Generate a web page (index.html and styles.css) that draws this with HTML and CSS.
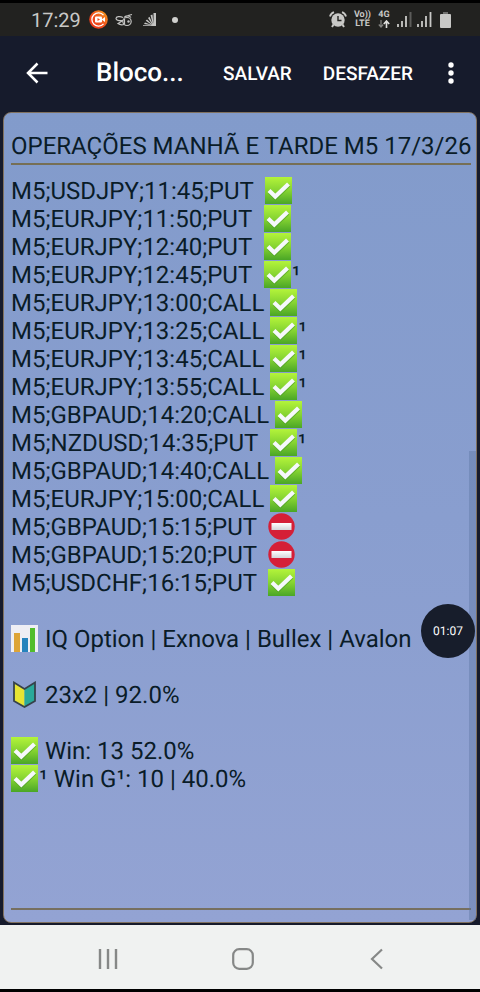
FILE: index.html
```
<!DOCTYPE html>
<html lang="pt-BR">
<head>
    <meta charset="UTF-8">
    <meta name="viewport" content="width=device-width, initial-scale=1.0">
    <title>Bloco de notas</title>
    <link rel="stylesheet" href="styles.css">
</head>
<body>
    <!-- icons reused in the note -->
    <svg class="defs" aria-hidden="true">
        <defs>
            <linearGradient id="green" x1="0" y1="0" x2="0" y2="1">
                <stop offset="0" stop-color="#b4f43a"/>
                <stop offset="0.5" stop-color="#86d432"/>
                <stop offset="1" stop-color="#4aa626"/>
            </linearGradient>
            <linearGradient id="bar" x1="0" y1="0" x2="0" y2="1">
                <stop offset="0" stop-color="#fff"/>
                <stop offset="1" stop-color="#d4d4d8"/>
            </linearGradient>
            <linearGradient id="rec" x1="0" y1="1" x2="1" y2="0">
                <stop offset="0" stop-color="#ee2d16"/>
                <stop offset="0.5" stop-color="#f0521c"/>
                <stop offset="1" stop-color="#f7a81c"/>
            </linearGradient>
        </defs>
        <symbol id="check" viewBox="0 0 27 27">
            <rect width="27" height="27" fill="url(#green)"/>
            <path d="M4.500 15l6 5.800L24 8" fill="none" stroke="#3f8f22" stroke-opacity=".5" stroke-width="4"/>
            <path d="M4 13.500l6.300 6L23.500 7" fill="none" stroke="#f6f8fb" stroke-width="4.200"/>
        </symbol>
        <symbol id="stop" viewBox="0 0 27 27">
            <circle cx="13.500" cy="13.500" r="13.200" fill="#d51f37"/>
            <rect x="3.500" y="10" width="20" height="7" fill="url(#bar)"/>
        </symbol>
        <symbol id="chart" viewBox="0 0 27 27">
            <rect width="27" height="27" fill="#eeeef4"/>
            <rect x="3" y="8" width="6" height="19" fill="#dda437"/>
            <rect x="11" y="13" width="6" height="14" fill="#2583bd"/>
            <rect x="19" y="3" width="5" height="24" fill="#51bd2c"/>
        </symbol>
        <symbol id="beginner" viewBox="0 0 27 27">
            <path d="M3 1.500l10.500 6.500v18L3 20z" fill="#e7e433"/>
            <path d="M24 1.500L13.500 8v18L24 20z" fill="#29a99a"/>
            <path d="M3 1.500L13.500 8 24 1.500V20l-10.500 6L3 20z" fill="none" stroke="#36424a" stroke-width="1.800"/>
        </symbol>
    </svg>

    <div class="status-bar">
        <span class="clock">17:29</span>
        <svg class="recorder" viewBox="0 0 19 19">
            <circle cx="9.500" cy="9.500" r="9.300" fill="url(#rec)"/>
            <path d="M14.500 5.200a6.600 6.600 0 1 0 0 8.600" fill="none" stroke="#fff" stroke-width="1.300"/>
            <rect x="6" y="6.500" width="7" height="6" rx="1" fill="#fff"/>
            <path d="M12.500 9.500l3.500-2.500v5z" fill="#fff"/>
            <path d="M8.500 8l2.500 1.500L8.500 11z" fill="#ef4f1c"/>
        </svg>
        <svg class="bee" viewBox="0 0 18 14">
            <g fill="none" stroke="#c4c4c2" stroke-width="1.200">
                <path d="M8 4.500C5 3 1 3.500 1 5.500S4 8 8 7.500L3 10.500c2 1.500 4 1.500 6 1"/>
                <ellipse cx="12" cy="8.500" rx="4.200" ry="4"/>
                <path d="M9.500 6v5M9 4.500c1.500-2 5-2.500 7 0M13 2.500l4-1"/>
            </g>
            <circle cx="13.500" cy="8.500" r="1.200" fill="#c4c4c2"/>
        </svg>
        <svg class="fan" viewBox="0 0 13 13">
            <path d="M13 13V0h-2.500v11L9.500 1.500l-2 .8L9.800 11 6.500 3.800 5 5l4.300 6.500L4 6.500l-1.300 1.300L9 12 2 9.500 1 11l8 1.300H0v.7z" fill="#c4c4c2"/>
        </svg>
        <span class="more-dot"></span>

        <svg class="alarm" viewBox="0 0 18 17">
            <path d="M1 5.500C1.500 3.500 3 2 5 1.200M17 5.500c-.5-2-2-3.500-4-4.300" fill="none" stroke="#c8c8c6" stroke-width="1.800"/>
            <circle cx="9" cy="9" r="6.700" fill="#c8c8c6"/>
            <path d="M4.500 13.500L3 16M13.500 13.500L15 16" stroke="#c8c8c6" stroke-width="2"/>
            <path d="M9 5v4.500h3.500" fill="none" stroke="#222220" stroke-width="1.400"/>
        </svg>
        <span class="net"><span>Vo))</span><span>LTE</span></span>
        <span class="net">
            <span>4G</span>
            <svg class="arrows" viewBox="0 0 12 8">
                <path d="M3 0v7M.8 4.500L3 7l2.200-2.500" fill="none" stroke="#858583" stroke-width="1.200"/>
                <path d="M8.500 8V1.500M5.800 4l2.700-3 2.700 3" fill="none" stroke="#e0e0de" stroke-width="1.600"/>
            </svg>
        </span>
        <svg class="signal" viewBox="0 0 15 15">
            <path d="M1 15v-3M5 15V9M9 15V4" stroke="#c8c8c6" stroke-width="1.800"/>
            <path d="M13.500 15V0" stroke="#5c5c5a" stroke-width="2"/>
        </svg>
        <svg class="signal" viewBox="0 0 15 15">
            <path d="M1 15v-3M5 15V9M9 15V4M13.500 15V0" stroke="#c8c8c6" stroke-width="1.800"/>
        </svg>
        <svg class="battery" viewBox="0 0 11 16">
            <path d="M3 0h5v3H3z" fill="#70706e"/>
            <rect y="2" width="11" height="14" rx="1" fill="#c8c8c6"/>
        </svg>
    </div>

    <header class="app-bar">
        <button class="back" aria-label="Voltar">
            <svg viewBox="0 0 22 22"><path d="M21.500 11H2M11.500 1.500L2 11l9.500 9.500" fill="none" stroke="#fff" stroke-width="2.500"/></svg>
        </button>
        <h1>Bloco...</h1>
        <button class="action">SALVAR</button>
        <button class="action">DESFAZER</button>
        <button class="menu" aria-label="Mais opções">
            <svg viewBox="0 0 6 22"><g fill="#fff"><circle cx="3" cy="3" r="2.700"/><circle cx="3" cy="11" r="2.700"/><circle cx="3" cy="19" r="2.700"/></g></svg>
        </button>
    </header>

    <main class="note">
        <input class="note-title" type="text" aria-label="Título" value="OPERAÇÕES MANHÃ E TARDE M5 17/3/26">
        <div class="note-text" role="textbox" aria-multiline="true" aria-label="Nota" contenteditable="true" spellcheck="false">
            <p>M5;USDJPY;11:45;PUT  <svg class="emoji"><use href="#check"/></svg></p>
            <p>M5;EURJPY;11:50;PUT  <svg class="emoji"><use href="#check"/></svg></p>
            <p>M5;EURJPY;12:40;PUT  <svg class="emoji"><use href="#check"/></svg></p>
            <p>M5;EURJPY;12:45;PUT  <svg class="emoji"><use href="#check"/></svg>¹</p>
            <p>M5;EURJPY;13:00;CALL <svg class="emoji"><use href="#check"/></svg></p>
            <p>M5;EURJPY;13:25;CALL <svg class="emoji"><use href="#check"/></svg>¹</p>
            <p>M5;EURJPY;13:45;CALL <svg class="emoji"><use href="#check"/></svg>¹</p>
            <p>M5;EURJPY;13:55;CALL <svg class="emoji"><use href="#check"/></svg>¹</p>
            <p>M5;GBPAUD;14:20;CALL <svg class="emoji"><use href="#check"/></svg></p>
            <p>M5;NZDUSD;14:35;PUT  <svg class="emoji"><use href="#check"/></svg>¹</p>
            <p>M5;GBPAUD;14:40;CALL <svg class="emoji"><use href="#check"/></svg></p>
            <p>M5;EURJPY;15:00;CALL <svg class="emoji"><use href="#check"/></svg></p>
            <p>M5;GBPAUD;15:15;PUT  <svg class="emoji"><use href="#stop"/></svg></p>
            <p>M5;GBPAUD;15:20;PUT  <svg class="emoji"><use href="#stop"/></svg></p>
            <p>M5;USDCHF;16:15;PUT  <svg class="emoji"><use href="#check"/></svg></p>
            <p><br></p>
            <p><svg class="emoji"><use href="#chart"/></svg> IQ Option | Exnova | Bullex | Avalon</p>
            <p><br></p>
            <p><svg class="emoji"><use href="#beginner"/></svg> 23x2 | 92.0%</p>
            <p><br></p>
            <p><svg class="emoji"><use href="#check"/></svg> Win: 13 52.0%</p>
            <p><svg class="emoji"><use href="#check"/></svg>¹ Win G¹: 10 | 40.0%</p>
        </div>
        <div class="scroll-thumb"></div>
    </main>

    <button class="timer">01:07</button>

    <nav class="nav-bar">
        <button aria-label="Recentes">
            <svg viewBox="0 0 22 22"><path d="M3 1v20M11 1v20M19 1v20" stroke="#868887" stroke-width="2.400"/></svg>
        </button>
        <button aria-label="Início">
            <svg viewBox="0 0 22 22"><rect x="1.200" y="1.200" width="19.600" height="19.600" rx="6" fill="none" stroke="#868887" stroke-width="2.200"/></svg>
        </button>
        <button aria-label="Voltar">
            <svg viewBox="0 0 22 22"><path d="M16 1.500L6 11l10 9.500" fill="none" stroke="#868887" stroke-width="2.200"/></svg>
        </button>
    </nav>
</body>
</html>
```
FILE: styles.css
```
* {
    box-sizing: border-box;
}
body {
    font-family: Roboto, sans-serif;
    text-rendering: geometricPrecision;
    background-color: #161b2c;
    margin: 0;
    min-height: 100vh;
    display: flex;
    flex-direction: column;
    position: relative;
    border-top: 3px solid #000;
    border-bottom: 3px solid #000;
}
svg {
    display: block;
    flex: none;
}
button {
    background: none;
    border: none;
    padding: 0;
    color: #fff;
    font-family: inherit;
    text-rendering: inherit;
    cursor: pointer;
}
.defs {
    position: absolute;
    width: 0;
    height: 0;
}

/* status bar */
.status-bar {
    display: flex;
    align-items: center;
    height: 33px;
    padding: 0 29px 0 31px;
    background-color: #222220;
    color: #c8c8c6;
}
.clock {
    font-size: 20px;
    margin-right: 8px;
}
.recorder {
    width: 19px;
    height: 19px;
    margin-right: 7px;
}
.bee {
    width: 18px;
    height: 14px;
    margin-right: 10px;
}
.fan {
    width: 13px;
    height: 13px;
}
.more-dot {
    width: 6px;
    height: 6px;
    margin-left: 16px;
    margin-right: auto;
    border-radius: 50%;
    background-color: #d0d0ce;
}
.alarm {
    width: 18px;
    height: 17px;
    margin-right: 7px;
}
.net {
    display: flex;
    flex-direction: column;
    align-items: center;
    margin-right: 7px;
    font-size: 9px;
    font-weight: 700;
    line-height: 9px;
}
.arrows {
    width: 12px;
    height: 8px;
}
.signal {
    width: 15px;
    height: 15px;
    margin-right: 5px;
}
.battery {
    width: 11px;
    height: 16px;
    margin-left: 3px;
}

/* app bar */
.app-bar {
    display: flex;
    align-items: center;
    gap: 31px;
    height: 74px;
    margin-bottom: 2px;
    padding: 0 22px 0 26px;
}
.back svg {
    width: 22px;
    height: 22px;
}
.app-bar h1 {
    flex: 1;
    margin: 0 0 0 17px;
    color: #fff;
    font-size: 26px;
    font-weight: 500;
}
.action {
    font-size: 19px;
    font-weight: 500;
}
.menu {
    padding: 0 4px;
}
.menu svg {
    width: 6px;
    height: 22px;
}

/* note */
.note {
    flex: 1;
    display: flex;
    flex-direction: column;
    position: relative;
    margin: 0 3px 2px;
    padding: 16px 5px 12px 7px;
    border: 1px solid #80715f;
    border-radius: 8px;
    background: linear-gradient(#829bcb, #899ecf 50%, #93a3d3);
    color: #0a1c28;
    font-size: 24px;
    line-height: 28px;
}
.note-title {
    width: 100%;
    height: 36px;
    padding: 0;
    border: none;
    border-bottom: 2px solid #766f55;
    border-radius: 0;
    background: none;
    color: inherit;
    font: inherit;
    text-rendering: inherit;
    outline: none;
}
.note-text {
    flex: 1;
    padding: 12px 0;
    border-bottom: 2px solid #766f60;
    outline: none;
}
.note-text p {
    margin: 0;
    height: 28px;
    white-space: pre;
}
.emoji {
    display: inline-block;
    width: 27px;
    height: 27px;
    margin-right: 1px;
    vertical-align: top;
}
.scroll-thumb {
    position: absolute;
    right: 0;
    bottom: 2px;
    width: 7px;
    height: 58%;
    background-color: rgba(90, 115, 160, 0.4);
}

/* floating recorder timer */
.timer {
    position: absolute;
    top: 601px;
    right: 5px;
    width: 54px;
    height: 54px;
    border-radius: 50%;
    background-color: #171d2b;
    font-size: 12px;
}

/* navigation bar */
.nav-bar {
    display: flex;
    justify-content: space-between;
    align-items: center;
    height: 64px;
    padding: 4px 92px 0 97px;
    background-color: #f0f2f1;
}
.nav-bar svg {
    width: 22px;
    height: 22px;
}
```
